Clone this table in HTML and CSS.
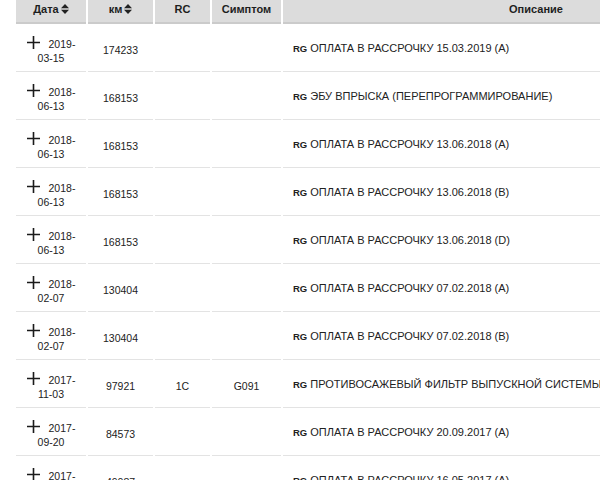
FILE: index.html
```html
<!DOCTYPE html>
<html lang="ru">
<head>
<meta charset="utf-8">
<link rel="stylesheet" href="styles.css">
</head>
<body>
<div class="table">
  <div class="head">
    <div class="th">Дата <svg class="sort" viewBox="0 0 8 10" width="8" height="10"><path d="M0 4.2L4 0L8 4.2Z M0 5.8L4 10L8 5.8Z"/></svg></div>
    <div class="th">км <svg class="sort" viewBox="0 0 8 10" width="8" height="10"><path d="M0 4.2L4 0L8 4.2Z M0 5.8L4 10L8 5.8Z"/></svg></div>
    <div class="th">RC</div>
    <div class="th">Симптом</div>
    <div class="th">Описание</div>
  </div>

  <div class="row">
    <div class="td date"><svg class="plus" viewBox="0 0 13 13" width="13" height="13"><path d="M6.5 0V13M0 6.5H13"/></svg> 2019-<wbr>03-15</div>
    <div class="td num">174233</div>
    <div class="td num"></div>
    <div class="td num"></div>
    <div class="td desc"><b>RG</b>ОПЛАТА В РАССРОЧКУ 15.03.2019 (A)</div>
  </div>
  <div class="row">
    <div class="td date"><svg class="plus" viewBox="0 0 13 13" width="13" height="13"><path d="M6.5 0V13M0 6.5H13"/></svg> 2018-<wbr>06-13</div>
    <div class="td num">168153</div>
    <div class="td num"></div>
    <div class="td num"></div>
    <div class="td desc"><b>RG</b>ЭБУ ВПРЫСКА (ПЕРЕПРОГРАММИРОВАНИЕ)</div>
  </div>
  <div class="row">
    <div class="td date"><svg class="plus" viewBox="0 0 13 13" width="13" height="13"><path d="M6.5 0V13M0 6.5H13"/></svg> 2018-<wbr>06-13</div>
    <div class="td num">168153</div>
    <div class="td num"></div>
    <div class="td num"></div>
    <div class="td desc"><b>RG</b>ОПЛАТА В РАССРОЧКУ 13.06.2018 (A)</div>
  </div>
  <div class="row">
    <div class="td date"><svg class="plus" viewBox="0 0 13 13" width="13" height="13"><path d="M6.5 0V13M0 6.5H13"/></svg> 2018-<wbr>06-13</div>
    <div class="td num">168153</div>
    <div class="td num"></div>
    <div class="td num"></div>
    <div class="td desc"><b>RG</b>ОПЛАТА В РАССРОЧКУ 13.06.2018 (B)</div>
  </div>
  <div class="row">
    <div class="td date"><svg class="plus" viewBox="0 0 13 13" width="13" height="13"><path d="M6.5 0V13M0 6.5H13"/></svg> 2018-<wbr>06-13</div>
    <div class="td num">168153</div>
    <div class="td num"></div>
    <div class="td num"></div>
    <div class="td desc"><b>RG</b>ОПЛАТА В РАССРОЧКУ 13.06.2018 (D)</div>
  </div>
  <div class="row">
    <div class="td date"><svg class="plus" viewBox="0 0 13 13" width="13" height="13"><path d="M6.5 0V13M0 6.5H13"/></svg> 2018-<wbr>02-07</div>
    <div class="td num">130404</div>
    <div class="td num"></div>
    <div class="td num"></div>
    <div class="td desc"><b>RG</b>ОПЛАТА В РАССРОЧКУ 07.02.2018 (A)</div>
  </div>
  <div class="row">
    <div class="td date"><svg class="plus" viewBox="0 0 13 13" width="13" height="13"><path d="M6.5 0V13M0 6.5H13"/></svg> 2018-<wbr>02-07</div>
    <div class="td num">130404</div>
    <div class="td num"></div>
    <div class="td num"></div>
    <div class="td desc"><b>RG</b>ОПЛАТА В РАССРОЧКУ 07.02.2018 (B)</div>
  </div>
  <div class="row">
    <div class="td date"><svg class="plus" viewBox="0 0 13 13" width="13" height="13"><path d="M6.5 0V13M0 6.5H13"/></svg> 2017-<wbr>11-03</div>
    <div class="td num">97921</div>
    <div class="td num">1C</div>
    <div class="td num">G091</div>
    <div class="td desc"><b>RG</b>ПРОТИВОСАЖЕВЫЙ ФИЛЬТР ВЫПУСКНОЙ СИСТЕМЫ</div>
  </div>
  <div class="row">
    <div class="td date"><svg class="plus" viewBox="0 0 13 13" width="13" height="13"><path d="M6.5 0V13M0 6.5H13"/></svg> 2017-<wbr>09-20</div>
    <div class="td num">84573</div>
    <div class="td num"></div>
    <div class="td num"></div>
    <div class="td desc"><b>RG</b>ОПЛАТА В РАССРОЧКУ 20.09.2017 (A)</div>
  </div>
  <div class="row">
    <div class="td date"><svg class="plus" viewBox="0 0 13 13" width="13" height="13"><path d="M6.5 0V13M0 6.5H13"/></svg> 2017-<wbr>05-16</div>
    <div class="td num">49087</div>
    <div class="td num"></div>
    <div class="td num"></div>
    <div class="td desc"><b>RG</b>ОПЛАТА В РАССРОЧКУ 16.05.2017 (A)</div>
  </div>
</div>
</body>
</html>
```
FILE: styles.css
```css
html, body {
  margin: 0;
  padding: 0;
  overflow: hidden;
  background: #fff;
}
body {
  font-family: "Liberation Sans", Arial, sans-serif;
  color: #222;
}
.table {
  width: max-content;
  padding-left: 16px;
}
.head, .row {
  display: grid;
  grid-template-columns: 70px 65px 55px 69px 506px;
  column-gap: 2px;
}
.th {
  background: #dcdcdc;
  height: 22px;
  line-height: 18px;
  border-bottom: 2px solid #cbcbcb;
  font-size: 11px;
  font-weight: bold;
  text-align: center;
  color: #1e1e1e;
}
.sort {
  fill: #222;
  vertical-align: -1px;
  margin-left: -1px;
}
.td {
  box-sizing: border-box;
  height: 48px;
  border-bottom: 1px solid #e3e3e3;
}
.date {
  padding: 12px 4px 0;
  font-size: 10.5px;
  line-height: 14px;
  text-align: center;
}
.plus {
  stroke: #1a1a1a;
  stroke-width: 1.6;
  fill: none;
  vertical-align: -1px;
  margin-right: 6px;
}
.num {
  padding-top: 4px;
  display: flex;
  align-items: center;
  justify-content: center;
  font-size: 10.5px;
}
.desc {
  padding: 1px 0 0 10px;
  display: flex;
  align-items: center;
  font-size: 11px;
  white-space: nowrap;
}
.desc b {
  font-size: 9.5px;
  margin-right: 3px;
}
```
